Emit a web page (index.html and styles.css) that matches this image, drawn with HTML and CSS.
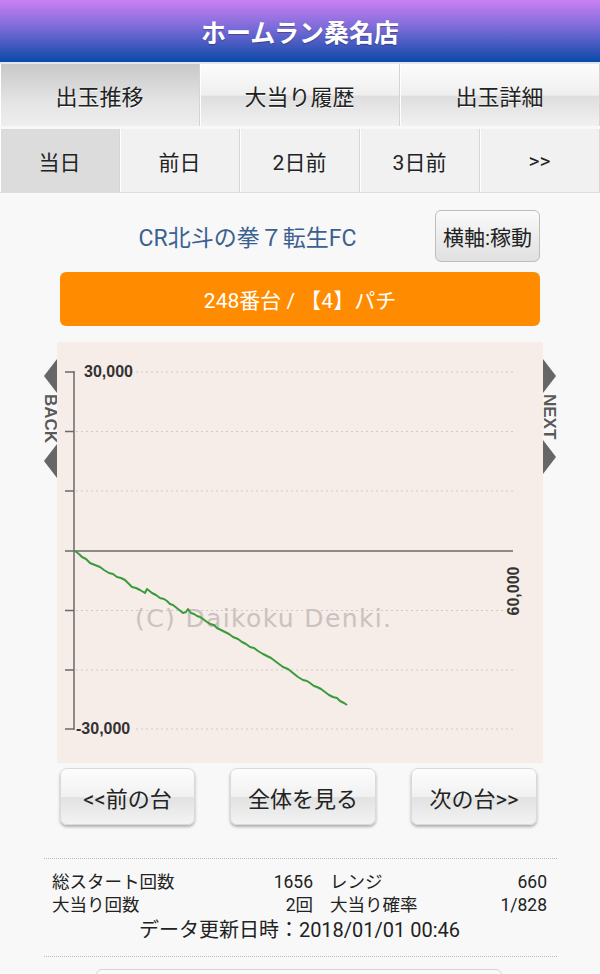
FILE: index.html
```html
<!DOCTYPE html>
<html lang="ja">
<head>
    <meta charset="UTF-8">
    <meta name="viewport" content="width=device-width, initial-scale=1.0">
    <title>ホームラン桑名店 - 出玉推移</title>
    <link rel="stylesheet" href="styles.css">
</head>
<body>

    <header class="site-header">
        <h1>ホームラン桑名店</h1>
    </header>

    <!-- メニュー -->
    <nav class="main-tabs">
        <a href="#" class="active">出玉推移</a>
        <a href="#">大当り履歴</a>
        <a href="#">出玉詳細</a>
    </nav>

    <nav class="day-tabs">
        <a href="#" class="active">当日</a>
        <a href="#">前日</a>
        <a href="#">2日前</a>
        <a href="#">3日前</a>
        <a href="#">&gt;&gt;</a>
    </nav>

    <div class="content">
        <div class="model-row">
            <h2 class="model-name">CR北斗の拳７転生FC</h2>
            <button type="button" class="axis-btn">横軸:稼動</button>
        </div>

        <div class="machine-bar">248番台 / 【4】パチ</div>

        <!-- グラフ -->
        <div class="graph-row">
            <a href="#" class="side-nav side-back">
                <span class="arrow"></span>
                <span class="side-label">BACK</span>
                <span class="arrow"></span>
            </a>
            <div class="graph">
                <svg width="486" height="421" viewBox="0 0 486 421">
                    <g class="grid-lines">
                        <line x1="79" y1="30" x2="456" y2="30"/>
                        <line x1="19" y1="89.5" x2="456" y2="89.5"/>
                        <line x1="19" y1="149" x2="456" y2="149"/>
                        <line x1="19" y1="268.5" x2="446" y2="268.5"/>
                        <line x1="19" y1="328" x2="456" y2="328"/>
                        <line x1="79" y1="387" x2="456" y2="387"/>
                    </g>
                    <text class="watermark" x="78" y="285" textLength="256">(C) Daikoku Denki.</text>
                    <g class="axis">
                        <line x1="17" y1="29" x2="17" y2="388"/>
                        <line x1="17" y1="209" x2="456" y2="209"/>
                        <path d="M8 30H17M8 89.5H17M8 149H17M8 209H17M8 268.5H17M8 328H17M8 387H17"/>
                    </g>
                    <text class="axis-label" x="27" y="35">30,000</text>
                    <text class="axis-label" x="19" y="392">-30,000</text>
                    <text class="axis-label" text-anchor="middle" transform="translate(462 249) rotate(-90)">60,000</text>
                    <polyline class="slump" points="18,209 22,212 25,215 29,217 33,221 38,223 43,225 47,228 52,231 56,232 60,235 64,236 68,238 72,242 75,245 79,246 83,248 88,251 90,247 95,251 99,253 103,256 107,257 110,259 113,262 116,263 121,267 126,271 129,270 131,267 134,271 137,272 140,274 143,275 146,277 150,280 153,282 157,283 160,286 164,288 168,290 172,292 176,295 181,297 185,300 189,302 193,305 197,306 201,309 206,312 210,314 214,316 218,319 222,322 226,325 231,327 236,331 241,335 246,338 250,339 253,341 257,344 260,345 264,347 268,350 272,353 276,355 280,356 283,359 287,361 290,363"/>
                </svg>
            </div>
            <a href="#" class="side-nav side-next">
                <span class="arrow"></span>
                <span class="side-label">NEXT</span>
                <span class="arrow"></span>
            </a>
        </div>

        <div class="nav-buttons">
            <button type="button" class="nav-btn btn-prev">&lt;&lt;前の台</button>
            <button type="button" class="nav-btn btn-all">全体を見る</button>
            <button type="button" class="nav-btn btn-next">次の台&gt;&gt;</button>
        </div>

        <!-- データ -->
        <div class="stats">
            <div class="stats-grid">
                <div class="stat"><span>総スタート回数</span><span>1656</span></div>
                <div class="stat"><span>レンジ</span><span>660</span></div>
                <div class="stat"><span>大当り回数</span><span>2回</span></div>
                <div class="stat"><span>大当り確率</span><span>1/828</span></div>
            </div>
            <p class="updated">データ更新日時：2018/01/01 00:46</p>
        </div>

        <div class="bottom-btn"></div>
    </div>

</body>
</html>
```

FILE: styles.css
```css
body {
    margin: 0;
    background-color: #f8f8f8;
    font-family: Roboto, "Noto Sans CJK JP", sans-serif;
    color: #222;
}
.site-header {
    height: 62px;
    border-bottom: 2px solid #dfe7f3;
    background: linear-gradient(to bottom, #cb80f3 0%, #7a6bd8 45%, #0b48a6 100%);
    display: flex;
    align-items: center;
    justify-content: center;
}
.site-header h1 {
    margin: 0;
    font-size: 25px;
    font-weight: bold;
    color: #fff;
    text-shadow: 0 1px 1px rgba(0, 0, 0, 0.3);
}
.main-tabs {
    display: grid;
    grid-template-columns: repeat(3, 1fr);
    height: 62px;
}
.main-tabs a {
    display: flex;
    align-items: center;
    justify-content: center;
    font-size: 22px;
    color: #222;
    text-decoration: none;
    text-shadow: 0 1px 0 #fff;
    border-right: 1px solid #d4d4d4;
    box-shadow: inset 1px 0 #fff;
    background: linear-gradient(#fcfcfc, #efefef 50%, #dedede 52%, #f1f1f1);
}
.main-tabs a.active {
    background: linear-gradient(#c8c8c8, #e4e4e4 60%, #eeeeee);
}
.day-tabs {
    display: grid;
    grid-template-columns: repeat(5, 1fr);
    height: 63px;
    margin-top: 3px;
    border-bottom: 1px solid #dcdcdc;
}
.day-tabs a {
    display: flex;
    align-items: center;
    justify-content: center;
    font-size: 21px;
    color: #222;
    text-decoration: none;
    background-color: #f1f1f1;
    border-right: 1px solid #d6d6d6;
    box-shadow: inset 1px 0 #fff;
}
.day-tabs a.active {
    background-color: #dcdcdc;
}
.content {
    padding-top: 17px;
}
.model-row {
    display: flex;
    align-items: center;
    height: 52px;
    margin: 0 60px;
}
.model-name {
    flex: 1;
    margin: 0;
    text-align: center;
    font-size: 23px;
    font-weight: normal;
    color: #3a6190;
}
.axis-btn {
    width: 105px;
    height: 52px;
    padding: 0;
    border: 1px solid #bdbdbd;
    border-radius: 6px;
    background: linear-gradient(#fafafa, #e0e0e0);
    font-family: Roboto, "Noto Sans CJK JP", sans-serif;
    font-size: 21px;
    color: #222;
}
.machine-bar {
    display: flex;
    align-items: center;
    justify-content: center;
    height: 54px;
    margin: 10px 60px 0;
    border-radius: 6px;
    background-color: #ff8c00;
    color: #fff;
    font-size: 21px;
}
.graph-row {
    display: flex;
    justify-content: center;
    margin-top: 16px;
}
.graph {
    width: 486px;
    height: 421px;
    background-color: #f6ece8;
}
.graph svg {
    display: block;
}
.grid-lines line {
    stroke: #cfc9c6;
    stroke-width: 1;
    stroke-dasharray: 2 3;
}
.axis line,
.axis path {
    stroke: #6a6a6a;
    stroke-width: 1.5;
    fill: none;
}
.axis-label {
    font-family: "Liberation Sans", Arial, sans-serif;
    font-size: 16px;
    font-weight: bold;
    fill: #333;
}
.watermark {
    font-family: "DejaVu Sans", sans-serif;
    font-size: 25px;
    fill: #cac2be;
}
.slump {
    fill: none;
    stroke: #3a9b3a;
    stroke-width: 2;
    stroke-linejoin: round;
}
.side-nav {
    width: 13px;
    display: flex;
    flex-direction: column;
    align-items: center;
    padding-top: 17px;
    text-decoration: none;
}
.side-nav .arrow {
    width: 0;
    height: 0;
    border-top: 17px solid transparent;
    border-bottom: 17px solid transparent;
}
.side-back .arrow {
    border-right: 13px solid #666;
}
.side-next .arrow {
    border-left: 13px solid #666;
}
.side-label {
    writing-mode: vertical-rl;
    font-family: "Liberation Sans", Arial, sans-serif;
    font-size: 17px;
    font-weight: bold;
    line-height: 13px;
    color: #5a5a5a;
    margin: 1px 0;
}
.nav-buttons {
    display: flex;
    justify-content: space-between;
    margin: 5px 63px 0 60px;
}
.nav-btn {
    height: 57px;
    padding: 0;
    border: 1px solid #dadada;
    border-radius: 7px;
    background: linear-gradient(#fdfdfd, #f1f1f1 50%, #e2e2e2 52%, #f3f3f3);
    box-shadow: 0 2px 3px rgba(0, 0, 0, 0.3);
    font-family: Roboto, "Noto Sans CJK JP", sans-serif;
    font-size: 22px;
    color: #222;
}
.btn-prev {
    width: 135px;
}
.btn-all {
    width: 146px;
}
.btn-next {
    width: 126px;
}
.stats {
    margin: 33px 43px 0 44px;
    padding: 12px 10px 12px 8px;
    border-top: 1px dotted #bbb;
    border-bottom: 1px dotted #bbb;
}
.stats-grid {
    display: grid;
    grid-template-columns: 261px 217px;
    column-gap: 17px;
    font-size: 17.5px;
    line-height: 23px;
}
.stat {
    display: flex;
    justify-content: space-between;
}
.updated {
    margin: 0;
    text-align: center;
    font-size: 20px;
    line-height: 27px;
}
.bottom-btn {
    height: 40px;
    margin: 12px 98px 0 96px;
    border: 1px solid #d4d4d4;
    border-radius: 6px 6px 0 0;
    background: linear-gradient(#fafafa, #eeeeee);
}
```
